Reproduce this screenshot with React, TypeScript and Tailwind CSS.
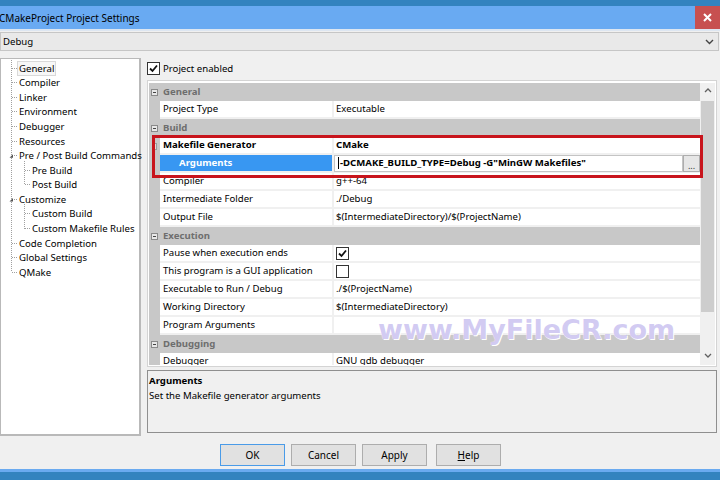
import React from "react";

const treeItems: { label: string; level: number; expander?: boolean; selected?: boolean }[] = [
  { label: "General", level: 0, selected: true },
  { label: "Compiler", level: 0 },
  { label: "Linker", level: 0 },
  { label: "Environment", level: 0 },
  { label: "Debugger", level: 0 },
  { label: "Resources", level: 0 },
  { label: "Pre / Post Build Commands", level: 0, expander: true },
  { label: "Pre Build", level: 1 },
  { label: "Post Build", level: 1 },
  { label: "Customize", level: 0, expander: true },
  { label: "Custom Build", level: 1 },
  { label: "Custom Makefile Rules", level: 1 },
  { label: "Code Completion", level: 0 },
  { label: "Global Settings", level: 0 },
  { label: "QMake", level: 0 },
];

type Row =
  | { kind: "cat"; label: string }
  | { kind: "row"; label: string; value?: string; bold?: boolean; check?: boolean; checked?: boolean; sub?: boolean }
  | { kind: "args" };

const rows: Row[] = [
  { kind: "cat", label: "General" },
  { kind: "row", label: "Project Type", value: "Executable" },
  { kind: "cat", label: "Build" },
  { kind: "row", label: "Makefile Generator", value: "CMake", bold: true, sub: true },
  { kind: "args" },
  { kind: "row", label: "Compiler", value: "g++-64" },
  { kind: "row", label: "Intermediate Folder", value: "./Debug" },
  { kind: "row", label: "Output File", value: "$(IntermediateDirectory)/$(ProjectName)" },
  { kind: "cat", label: "Execution" },
  { kind: "row", label: "Pause when execution ends", check: true, checked: true },
  { kind: "row", label: "This program is a GUI application", check: true, checked: false },
  { kind: "row", label: "Executable to Run / Debug", value: "./$(ProjectName)" },
  { kind: "row", label: "Working Directory", value: "$(IntermediateDirectory)" },
  { kind: "row", label: "Program Arguments", value: "" },
  { kind: "cat", label: "Debugging" },
  { kind: "row", label: "Debugger", value: "GNU gdb debugger" },
];

const ROW_H = 14.57;

function TreeLines() {
  const c = (i: number) => 2 + ROW_H * i + ROW_H / 2;
  const lines: React.ReactNode[] = [];
  lines.push(<line key="v0" x1={10.5} y1={1} x2={10.5} y2={c(14)} />);
  treeItems.forEach((it, i) => {
    if (it.level === 0) {
      lines.push(<line key={"h" + i} x1={11} y1={c(i)} x2={16} y2={c(i)} />);
    } else {
      lines.push(<line key={"h" + i} x1={24} y1={c(i)} x2={29} y2={c(i)} />);
    }
  });
  lines.push(<line key="v1" x1={23.5} y1={c(6) + 5} x2={23.5} y2={c(8)} />);
  lines.push(<line key="v2" x1={23.5} y1={c(9) + 5} x2={23.5} y2={c(11)} />);
  return (
    <svg className="absolute left-0 top-0" width="140" height="300">
      <g stroke="#a0a0a0" strokeWidth="1" strokeDasharray="1 1" shapeRendering="crispEdges">
        {lines}
      </g>
      <path d={`M8.5 ${c(6) + 2} L12 ${c(6) - 1.5} L12 ${c(6) + 2} Z`} fill="#555" />
      <path d={`M8.5 ${c(9) + 2} L12 ${c(9) - 1.5} L12 ${c(9) + 2} Z`} fill="#555" />
    </svg>
  );
}

function MinusBox() {
  return (
    <svg width="7" height="7" viewBox="0 0 7 7">
      <rect x="0.5" y="0.5" width="6" height="6" fill="#e8e8e8" stroke="#8a8a8a" />
      <line x1="2" y1="3.5" x2="5" y2="3.5" stroke="#444" />
    </svg>
  );
}

function CheckBox({ checked }: { checked: boolean }) {
  return (
    <div className="w-[13px] h-[13px] shrink-0 border border-[#333] bg-white flex items-center justify-center">
      {checked && (
        <svg width="9" height="9" viewBox="0 0 9 9">
          <path d="M1 4.5 L3.5 7 L8 1.5" fill="none" stroke="#111" strokeWidth="1.8" />
        </svg>
      )}
    </div>
  );
}

function GridRow({ r }: { r: Row }) {
  if (r.kind === "cat") {
    return (
      <div className="h-[18px] shrink-0 bg-[#c8c8c8] flex items-center">
        <div className="w-[11px] flex justify-center">
          <MinusBox />
        </div>
        <span className="pl-[3px] font-bold text-[#6e6e6e]">{r.label}</span>
      </div>
    );
  }
  if (r.kind === "args") {
    return (
      <div className="h-[18px] shrink-0 flex">
        <div className="w-[11px] bg-[#c8c8c8]" />
        <div className="w-[172px] bg-[#3897f2] text-white font-bold pl-[19px] flex items-center border-b-2 border-[#f0f0f0]">
          Arguments
        </div>
        <div className="w-[2px] bg-[#f0f0f0]" />
        <div className="flex-1 flex items-center bg-white border-b-2 border-[#f0f0f0]">
          <div className="flex-1 h-[17px] border border-[#c4c4c4] flex items-center pl-[3px] font-bold text-black whitespace-nowrap">
            <span className="w-px h-[12px] bg-black mr-[1px]" />
            -DCMAKE_BUILD_TYPE=Debug -G"MinGW Makefiles"
          </div>
          <div className="w-[17px] h-[17px] border border-[#adadad] bg-[#e6e6e6] flex items-end justify-center text-[9px] leading-[11px] text-[#333]">
            ...
          </div>
        </div>
      </div>
    );
  }
  return (
    <div className="h-[18px] shrink-0 flex">
      <div className="w-[11px] bg-[#c8c8c8] flex items-center justify-center">
        {r.sub && (
          <svg width="5" height="7" viewBox="0 0 5 7">
            <rect x="0.5" y="0.5" width="4" height="6" fill="#dcdcdc" stroke="#9a9a9a" />
          </svg>
        )}
      </div>
      <div
        className={
          "w-[172px] pl-[3px] flex items-center bg-white border-b-2 border-[#f0f0f0] text-black whitespace-nowrap " +
          (r.bold ? "font-bold" : "")
        }
      >
        {r.label}
      </div>
      <div className="w-[2px] bg-[#f0f0f0]" />
      <div
        className={
          "flex-1 pl-[2px] flex items-center bg-white border-b-2 border-[#f0f0f0] text-black whitespace-nowrap " +
          (r.bold ? "font-bold" : "")
        }
      >
        {r.check ? <CheckBox checked={!!r.checked} /> : r.value}
      </div>
    </div>
  );
}

export default function App() {
  return (
    <div className="w-[720px] h-[480px] bg-[#f0f0f0] relative overflow-hidden flex flex-col font-['Noto_Sans',sans-serif] text-[9.6px] leading-none text-black">
      {/* title */}
      <div className="h-[6px] bg-[#3383bf]" />
      <div className="h-[23px] bg-[#69aaf2] flex items-center">
        <span className="ml-[-1px] text-[10px] text-black">CMakeProject Project Settings</span>
        <div className="ml-auto w-[25px] h-full bg-[#c75050] flex items-center justify-center">
          <svg width="9" height="9" viewBox="0 0 9 9">
            <path d="M1 1 L8 8 M8 1 L1 8" stroke="white" strokeWidth="2" />
          </svg>
        </div>
      </div>
      <div className="h-[2px] bg-[#dde6f1]" />
      {/* combobox */}
      <div className="mt-[1px] h-[19px] w-[719px] border border-[#c6c6c6] bg-[#e9e9e9] flex items-center pl-[2px]">
        <span>Debug</span>
        <svg className="ml-auto mr-[4px]" width="9" height="6" viewBox="0 0 9 6">
          <path d="M1 1 L4.5 4.5 L8 1" fill="none" stroke="#444" strokeWidth="1.4" />
        </svg>
      </div>
      {/* main */}
      <div className="mt-[7px] flex">
        {/* tree */}
        <div className="w-[141px] h-[378px] bg-white border border-[#b9b9b9] border-r-2 border-b-2 relative pt-[2px]">
          <TreeLines />
          {treeItems.map((it, i) => (
            <div
              key={i}
              className={
                "h-[14.57px] flex items-center relative whitespace-nowrap " + (it.level === 0 ? "pl-[16px]" : "pl-[29px]")
              }
            >
              <span
                className={
                  "px-[1px] leading-[13px] " +
                  (it.selected ? "border border-[#d9d9d9] bg-[#f7f7f7]" : "border border-transparent")
                }
              >
                {it.label}
              </span>
            </div>
          ))}
        </div>
        {/* right */}
        <div className="ml-[6px] w-[570px] flex flex-col">
          <div className="h-[22px] flex items-start pt-[4px]">
            <CheckBox checked />
            <span className="ml-[3px] leading-[13px]">Project enabled</span>
          </div>
          <div className="h-[287px] border border-[#d4d4d4] bg-white relative flex p-[1px] pt-[2px] overflow-hidden">
            <div className="flex-1 flex flex-col overflow-hidden">
              {rows.map((r, i) => (
                <GridRow key={i} r={r} />
              ))}
            </div>
            <div className="w-[15px] bg-[#f0f0f0] flex flex-col items-center">
              <svg className="mt-[5px]" width="8" height="5" viewBox="0 0 8 5">
                <path d="M1 4 L4 1 L7 4" fill="none" stroke="#606060" strokeWidth="1.3" />
              </svg>
              <div className="mt-[8px] w-[13px] h-[211px] bg-[#cdcdcd]" />
              <svg className="mt-auto mb-[7px]" width="8" height="5" viewBox="0 0 8 5">
                <path d="M1 1 L4 4 L7 1" fill="none" stroke="#606060" strokeWidth="1.3" />
              </svg>
            </div>
            <div className="absolute left-[4px] top-[54px] w-[551px] h-[43px] border-[3px] border-[#c8141c]" />
          </div>
          <div className="mt-[3px] h-[63px] border border-[#8f8f8f] bg-[#f0f0f0] px-[1px] pt-[5px]">
            <div className="font-bold">Arguments</div>
            <div className="mt-[5px]">Set the Makefile generator arguments</div>
          </div>
        </div>
      </div>
      {/* buttons */}
      <div className="mt-[8px] h-[23px] flex pl-[220px]">
        <button className="w-[65px] h-[22px] border border-[#4a9be8] bg-[#e1e1e1] text-[10px]">OK</button>
        <button className="ml-[6px] w-[65px] h-[22px] border border-[#adadad] bg-[#e1e1e1] text-[10px]">Cancel</button>
        <button className="ml-[6px] w-[65px] h-[22px] border border-[#adadad] bg-[#e1e1e1] text-[10px]">Apply</button>
        <button className="ml-[9px] w-[65px] h-[22px] border border-[#adadad] bg-[#e1e1e1] text-[10px]">
          <span className="underline">H</span>elp
        </button>
      </div>
      <div className="mt-auto h-[3px] bg-[#6aaaf0]" />
      <div className="h-[8px] bg-[#3383bf]" />
      {/* watermark */}
      <div className="absolute left-[378px] top-[316px] font-['DejaVu_Sans',sans-serif] font-bold text-[27px] leading-none text-[#a597e6]/50 [text-shadow:0_0_1px_#ffffff,1px_1px_0_#ffffff]">
        www.MyFileCR.com
      </div>
    </div>
  );
}
